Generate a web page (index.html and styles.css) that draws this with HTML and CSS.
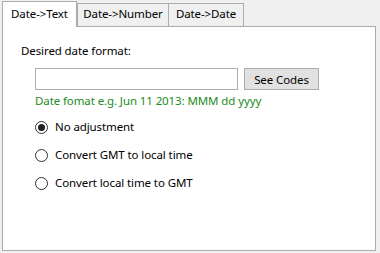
FILE: index.html
```html
<!DOCTYPE html>
<html lang="en">
<head>
  <meta charset="UTF-8">
  <title>Date conversion</title>
  <link rel="stylesheet" href="styles.css">
</head>
<body>
  <div class="window">
    <!-- tab strip -->
    <div class="tabs">
      <div class="tab active">Date-&gt;Text</div>
      <div class="tab tab-number">Date-&gt;Number</div>
      <div class="tab">Date-&gt;Date</div>
    </div>

    <div class="panel">
      <div class="caption">Desired date format:</div>

      <div class="format-row">
        <input type="text" class="format-input">
        <button class="codes-btn">See Codes</button>
      </div>
      <div class="hint">Date fomat e.g. Jun 11 2013: MMM dd yyyy</div>

      <div class="options">
        <label class="option"><span class="radio checked"></span>No adjustment</label>
        <label class="option"><span class="radio"></span>Convert GMT to local time</label>
        <label class="option"><span class="radio"></span>Convert local time to GMT</label>
      </div>
    </div>
  </div>
</body>
</html>
```

FILE: styles.css
```css
html, body {
  margin: 0;
  padding: 0;
  height: 100%;
}

body {
  background-color: #f0f0f0;
  font-family: "Noto Sans", "Open Sans", sans-serif;
  font-size: 11.5px;
  letter-spacing: -0.1px;
  color: #000;
}

.window {
  box-sizing: border-box;
  height: 100%;
  padding: 1px 4px 2px 2px;
  display: flex;
  flex-direction: column;
}

/* tabs */
.tabs {
  display: flex;
  align-items: flex-end;
  height: 25px;
}

.tab {
  box-sizing: border-box;
  width: 76px;
  height: 23px;
  line-height: 20px;
  text-align: center;
  background-color: #f0f0f0;
  border: 1px solid #acacac;
  border-bottom: none;
  margin-left: -1px;
}

.tab-number {
  width: 92px;
}

.tab.active {
  width: 75px;
  height: 26px;
  margin-left: 0;
  margin-bottom: -1px;
  line-height: 24px;
  background-color: #fff;
  position: relative;
  z-index: 1;
}

.tab.active + .tab {
  margin-left: 0;
}

/* content panel */
.panel {
  flex: 1;
  background-color: #fff;
  border: 1px solid #acacac;
  padding: 16px 18px 0 18px;
}

.caption {
  line-height: 16px;
}

.format-row {
  display: flex;
  margin: 9px 0 0 14px;
  gap: 6px;
}

.format-input {
  box-sizing: border-box;
  width: 203px;
  height: 22px;
  margin: 0;
  border: 1px solid #abadb3;
  font: inherit;
}

.codes-btn {
  box-sizing: border-box;
  width: 75px;
  height: 22px;
  margin: 0;
  padding: 0;
  background-color: #e1e1e1;
  border: 1px solid #adadad;
  font: inherit;
  letter-spacing: inherit;
  color: #000;
}

.hint {
  margin: 3px 0 0 14px;
  line-height: 16px;
  color: #228b22;
}

.options {
  margin: 10px 0 0 14px;
  display: flex;
  flex-direction: column;
  gap: 12px;
}

.option {
  display: flex;
  align-items: center;
  height: 16px;
  line-height: 16px;
}

.radio {
  box-sizing: border-box;
  width: 13px;
  height: 13px;
  margin-right: 7px;
  border: 1px solid #333;
  border-radius: 50%;
  background-color: #fff;
  display: flex;
  align-items: center;
  justify-content: center;
}

.radio.checked::after {
  content: "";
  width: 7px;
  height: 7px;
  border-radius: 50%;
  background-color: #222;
}
```
